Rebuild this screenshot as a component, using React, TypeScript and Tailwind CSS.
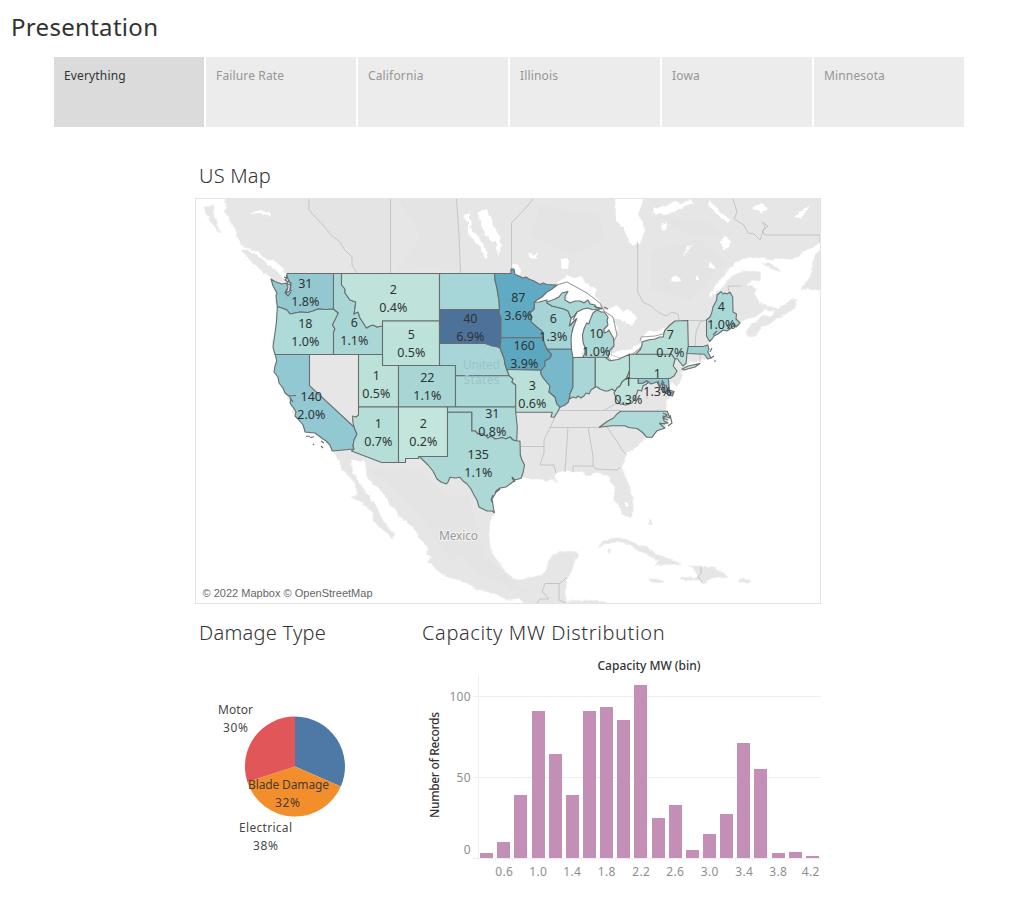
const FONT = "font-['Noto_Sans',sans-serif]";

const tabs = ["Everything", "Failure Rate", "California", "Illinois", "Iowa", "Minnesota"];

type Shape = { id: string; fill: string; points: string };

const LAND: string[] = [
  // North American mainland, clockwise from the Pacific coast of Canada
  "225,198 226,206 225,212 228,217 231,223 235,227 237,235 240,242 244,247 251,249 258,252 262,256 268,260 274,263 280,267 283,271 287,274 286,283 281,284 271,279 274,288 276,296 277,306 276,322 275,332 273,342 275,354 277,360 274,372 279,383 286,395 290,403 295,415 303,425 305,432 315,433 323,439 330,444 332,451 334,452 340,463 343,471 350,477 356,485 357,495 351,497 361,502 373,513 373,521 380,527 387,533 392,539 395,534 390,530 383,520 378,511 375,503 367,495 363,487 359,483 353,473 351,460 365,461 367,476 372,484 377,487 387,497 389,504 397,510 397,514 408,523 415,530 421,540 427,547 427,554 431,557 428,562 440,572 450,578 460,580 467,583 477,590 488,592 497,594 507,600 520,598 527,606 566,606 566,590 567,580 572,570 575,560 578,556 577,552 565,551 552,555 548,563 547,570 541,575 529,578 520,580 514,578 507,573 501,566 497,560 492,553 490,547 489,535 490,523 495,513 491,505 493,497 497,492 503,487 512,483 513,478 521,477 533,479 540,479 547,481 552,480 558,482 554,477 557,473 563,471 573,472 582,471 586,475 590,476 593,473 600,472 603,475 609,477 611,482 615,487 614,495 614,500 620,507 622,514 625,517 630,518 633,515 633,506 632,494 629,486 625,477 622,467 627,452 637,447 643,440 652,437 657,431 665,428 670,418 666,411 666,403 672,393 669,387 672,383 677,386 682,378 681,372 684,366 690,362 704,360 711,357 707,349 710,341 715,335 723,331 730,328 740,323 746,319 755,317 762,312 766,308 758,301 755,294 757,289 752,287 746,285 752,280 760,281 762,276 760,272 745,271 736,274 728,280 722,288 710,298 709,294 715,287 718,281 725,275 729,268 738,261 745,258 755,257 772,260 780,258 789,259 798,257 806,250 813,247 824,241 824,194 225,194",
  "242,250 247,250 257,255 263,260 268,265 276,270 285,281 281,283 273,279 264,273 253,263 247,257",
  "204,207 214,206 213,212 216,220 220,233 215,227 210,221 206,213",
  "824,246 816,254 812,265 811,275 805,284 801,289 824,290",
  "747,332 751,324 759,319 765,315 770,317 778,309 787,303 791,299 797,300 795,308 787,313 778,318 770,324 762,327 756,335 750,337 747,335",
  "762,263 770,263 777,268 781,272 775,270 769,268",
  "761,301 767,307 775,308 778,311 769,311 763,308",
  "598,547 603,541 615,538 622,538 630,541 638,545 648,548 656,554 665,557 674,561 681,564 655,565 659,560 651,558 645,553 636,550 631,545 622,542 608,543 604,544",
  "688,566 702,566 715,567 719,571 725,574 728,578 720,577 712,578 704,584 700,580 680,580 681,577 695,578 697,574 693,568",
  "649,579 657,579 664,582 656,583 651,582",
  "739,579 749,579 751,582 739,582",
  "650,519 652,521 652,525 649,524",
  "608,549 611,549 611,552 608,552",
  "566,601 585,600 607,602 607,604 566,604",
];

const WATER: string[] = [
  "615,194 645,194 642,204 638,214 642,221 645,230 642,239 641,245 637,243 633,246 629,241 626,233 622,226 616,221",
  "478,212 487,209 489,216 492,220 493,226 500,236 501,245 498,257 496,250 497,243 491,241 485,235 481,225",
  "463,216 470,213 470,220 472,231 478,236 483,244 488,253 487,259 483,255 480,246 474,241 468,233 468,223",
  "561,259 565,257 569,260 568,269 561,268",
  "528,252 533,256 539,252 536,259 531,258",
  "512,264 518,264 521,270 520,276 514,274",
  // Lake Superior
  "534,302 547,292 557,285 558,281 563,280 567,275 574,278 581,276 586,283 596,289 595,294 600,303 601,309 595,305 588,300 580,301 570,303 566,300 568,292 562,293 555,299 547,302",
  // Lake Michigan
  "577,312 583,309 597,310 591,320 587,323 583,335 585,348 580,357 573,358 570,348 571,338 574,327 569,326 573,318",
  // Lake Huron and Georgian Bay
  "598,310 607,310 617,305 622,311 631,310 637,318 632,326 622,320 613,318 618,328 615,339 609,342 606,333 608,318",
  // Lake Erie
  "607,357 611,353 618,351 629,350 642,342 641,350 629,355 618,361 610,360",
  // Lake Ontario
  "640,338 648,332 660,331 672,323 665,330 665,337 655,339 642,341",
  "654,208 666,206 675,201 682,204 690,199 694,203 684,206 676,211 666,215 653,213",
  "710,199 715,207 724,215 732,221 728,223 718,215 708,205",
  "752,208 762,203 768,209 761,213",
  "794,217 804,209 811,205 806,213 800,218",
  "683,256 687,248 693,244 688,251",
  "721,241 725,235 730,241 729,247 723,250",
  "661,225 668,223 664,231",
  "671,279 677,276 682,281 673,282",
  "707,267 711,261 716,269",
  "696,276 699,276 699,280 696,280",
  "267,259 276,262 285,270 281,272 272,268",
  "250,214 258,210 270,214 271,216 260,213",
  "625,502 628,503 628,507 625,506",
];

const RELIEF: string[] = [
  "300,198 390,198 390,272 357,272 350,250 322,225",
  "400,200 456,200 460,270 395,270 420,238",
  "540,205 600,215 605,240 570,255 530,235",
  "650,250 700,240 725,262 690,300 650,290",
  "370,470 420,470 450,500 480,550 450,560 420,515",
  "430,495 470,497 485,555 530,595 480,575 450,548",
  "655,215 710,222 730,238 690,236",
];

const OUTER_LINES: string[] = [
  "309,199 309,210 317,219 323,225 331,235 340,242 344,249 352,257 352,265 357,273",
  "390.5,199 390.5,273",
  "456.5,199 459,235 460.5,273",
  "533,199 523,211 511.5,223 511.5,270",
  "637.7,242 637.7,292 643,302 651,306 658,312 666,316 672,312 678,314 679,320",
  "733,199 737,212 734,219 744,225 748,233 754,234 760,240 765,226 762,222 768,226 762,231 765,235 820,235 820,242",
  "706,320 700,322 696,332 695,346",
  "688,320.5 707,320.5 M700,354 700,362",
  "729,292 728,286 741,286",
  "557,285 567,282 587,293 600,303 604,311 613,317 617,335 613,343 611,355 623,359 642,348",
  "558,410.5 621,410.5",
  "550,427.5 600,427.5",
  "568,427 565,472",
  "588,427 593,456 593,466",
  "573,472 573,466 593,466 596,469 617,470 620,467",
  "607,427 618,443 622,450 627,455",
  "558,408 555,417 550,428 544,440 544,453 540,465 554,465 556,473",
  "520,446.5 544,446.5",
  "603,411 615,404 622,403 635,397",
  "537,603 540,599 549,599 542,591 545,583.5 559,583.5 559,600 566,603",
  "559,584 564,580 567,577",
  "701,567 701,573 698,577 702,582",
  "646,381 647,399",
];

const STATES: Shape[] = [
  { id: "WA", fill: "#94c8d0", points: "271,279 275,281.5 282,284 286,283 288,287 286,293 290,291 291,285 287,277 287,273.5 333.5,273.5 333.5,309 326,309.5 318,309 313,311 308,312.5 300,312 295,313 290,314 287,310 282,308 277.3,306.7 276,296 277,293 273,286" },
  { id: "OR", fill: "#aedad7", points: "277.3,306.7 282,308 287,310 290,314 295,313 300,312 308,312.5 313,311 318,309 326,309.5 333.5,309 338.3,313 337,317 332.5,325 335,329 333.5,332 333.5,354.5 275,354.5 273,347 274,340 275,333 276.5,322" },
  { id: "CA", fill: "#92c8d1", points: "275.3,354.5 309.5,354.5 309.5,385.7 354,427 357,434.3 354,440 353,446 354,449 332.3,451 330,445 326,441 323,439 319,436 315,433 305,432 304,428 303,425 299,420 295,416 296,412 295,410 290,403 291,399 289,396 285,393 283,388 279,383 278,377 274,372 275,366 276.7,361" },
  { id: "ID", fill: "#a9d7d6", points: "333.5,273.5 341.5,273.5 341.5,285 345,289 345,293 350,300 355.7,302 355,308 354,314 358,312 360,318 362,321 366.5,328 370,326 373,325 377,327 382.5,326 382.5,354.5 333.5,354.5 333.5,332 335,329 332.5,325 338.3,313 333.5,309" },
  { id: "MT", fill: "#bfe3da", points: "341.5,273.5 439.5,273.5 439.5,321 382.5,321 382.5,326 377,327 373,325 370,326 366.5,328 362,321 360,318 358,312 354,314 355,308 355.7,302 350,300 345,293 345,289 341.5,285" },
  { id: "WY", fill: "#bde2da", points: "382.5,321 439.5,321 439.5,365.5 382.5,365.5" },
  { id: "UT", fill: "#bbe1d9", points: "358.5,354.5 382.5,354.5 382.5,365.5 398.5,365.5 398.5,407 358.5,407" },
  { id: "AZ", fill: "#b5ded8", points: "358.5,407 398.5,407 398.5,462.5 381.7,462.5 351.5,451 354,449 353,446 354,440 357,434.3 354,427 352.7,421 352.7,416 356,417 358.5,415" },
  { id: "CO", fill: "#a8d6d5", points: "398.5,365.5 455.5,365.5 455.5,407 398.5,407" },
  { id: "NM", fill: "#c3e6dc", points: "398.5,407 447.5,407 447.5,456.5 418.5,456.5 418.5,458.5 405.5,458.5 405.5,462.5 398.5,462.5" },
  { id: "ND", fill: "#a6d6d7", points: "439.5,273.5 494.5,273.5 495,280 497,288 498,295 499,300 499.5,309.5 439.5,309.5" },
  { id: "SD", fill: "#4d7299", points: "439.5,309.5 499.5,309.5 499,313 501,318 501,338 500,348 496,346.5 492,346 488,344.5 485,343.5 439.5,343.5" },
  { id: "NE", fill: "#a8d6d8", points: "439.5,343.5 485,343.5 488,344.5 492,346 496,346.5 500,348 502,353 504,358 505,364 506.7,369.5 509.3,375.8 455.5,375.8 455.5,365.5 439.5,365.5" },
  { id: "KS", fill: "#abd9d7", points: "455.5,375.8 509.3,375.8 513,379 512,382 515.7,385 515.7,407 455.5,407" },
  { id: "OK", fill: "#acd9d7", points: "447.5,407 515.7,407 515.7,412 517.3,427 516.7,441 513,440 510,437 506,439 502,437.5 499,438.5 495,439 491,436 488,438 486,436 483,434 478,434 475,431 471.7,431 471.7,412.3 447.5,412.3" },
  { id: "TX", fill: "#acd9d6", points: "447.5,412.3 471.7,412.3 471.7,431 475,431 478,434 483,434 486,436 488,438 491,436 495,439 499,438.5 502,437.5 506,439 510,437 513,440 516.7,441 520,441 520.3,455 522,460 524.5,465 523,473 521,478.3 515,480 512,477 514,481 511.5,483 506,487 500,488 496,491 495,494 492,499 493,505 494.3,512.7 492,511 487,511 479,507 477,500 474,495 471,489 467,484 463,481 460,477.3 455,478 450,477.3 448,482 446.5,484 441,482 437,479 433,471 428,465 419.3,456.5 447.5,456.5" },
  { id: "MN", fill: "#60abc3", points: "494.5,273.5 511,273.5 511,269 514,269 515,274.5 519,276 523,278 526,277 529,279 534,281 540,284.5 543,283 547,284.5 557,285 552,289 547,292 542,297 537,300 534.3,302.3 534.3,309 530,313 532,317 531,321.7 536.7,326.7 542,331 543.3,337.7 501,337.7 501,318 499,313 499.5,309.5 499,300 498,295 497,288 495,280" },
  { id: "IA", fill: "#5ba7c0", points: "501,337.7 543.3,337.7 544,342 547,349.3 551.7,354.3 550,358.3 545,361 545,366 541,370.3 506.7,369.5 505,364 504,358 502,353 500,348" },
  { id: "MO", fill: "#bbe0d9", points: "506.7,369.5 541,370.3 541,374 543.3,378 550,386 549,392 555,397 557,404 560,407.3 557,413 554,417.3 551,417 552.3,412.3 515.7,412.3 515.7,385 512,382 513,379 509.3,375.8" },
  { id: "WI", fill: "#a4d4d5", points: "534.3,302.3 539,302 547,300 547,303 552,306 560,308 564,309 568,311 570,316 571,319 569.3,326 573,322 576.7,318.5 575,323 573.3,327 572,332 571,338 571.5,349.3 547,349.3 544,342 543.3,337.7 542,331 536.7,326.7 531,321.7 532,317 530,313 534.3,309" },
  { id: "UP", fill: "#aad8d6", points: "547,302 555,299 559,297 562,293 568,291.5 565,296 565,300 570,303 575,301 580,301 584,303 588,300 590,304 595,305 596,308 602,308 597,310 592,309.5 588,308 583,309 577,312 574,316 571,318 568,311 564,309 560,308 552,306 547,303" },
  { id: "MI", fill: "#aad8d6", points: "593,313 597,310 601,312 604,312 608,317 607,321 608,325 604,329 604,333 607,332 609,330 611,334 613.5,338 614,346 610,350 608,357.5 583,357.3 585,353 585,348 583,342 582.5,335 584,329 586.7,323 589,324 590,320" },
  { id: "IL", fill: "#77b9ca", points: "547,349.3 571.5,349.3 573,358 573,387 570,394 568.5,402 565,405 560,407.3 557,404 555,397 549,392 550,386 543.3,378 541,374 541,370.3 545,366 545,361 550,358.3 551.7,354.3" },
  { id: "IN", fill: "#a9d7d7", points: "573,357.5 595.3,357.3 595.3,387 591,390 589,394 586,393 584,396 581,398 578,396 576,398 573,397 569.5,399 570,394 573,387" },
  { id: "OH", fill: "#bbe1d9", points: "595.3,357.3 605,357.3 610,360.7 618,359.5 629.5,354.3 629.5,371 626.7,378 622,382 620,386 617,388 615,391.5 612,389 608,391 605,391 600,389 597.3,387 595.3,387" },
  { id: "WV", fill: "#bfe4da", points: "629.5,371 629.5,378.5 638.3,378.5 638.3,383.5 643,383 646.7,380.7 648,383 643,386 641.7,391 638,390 637,393 635,398 632,403 629,404 626,405 620,404 618,401 616.5,399 614,393 615,391.5 617,388 620,386 622,382 626.7,378" },
  { id: "PA", fill: "#b7dfd8", points: "629.5,354.3 671.7,354.3 675,359 673.3,366 677,371 674,376 670,378.5 629.5,378.5" },
  { id: "NY", fill: "#b7dfd8", points: "635.7,354.3 640.7,349 642,345 642,342 648,340 655,339 660,337 663.3,337 664,333 665,330 670,325 675,321 687.7,320.5 688.3,346.5 687,353.5 686,363.5 683,366 677,358.5 675,359 671.7,354.3" },
  { id: "LI", fill: "#b7dfd8", points: "682,369 688,366 700,363.5 695,367 684,370" },
  { id: "MD", fill: "#93c8d1", points: "638.3,378.5 668.3,378.5 669.3,390 674,391.5 672.5,396 669,395 663.5,391.5 662,382 660,388 657,382 651,384 646.7,380.7 643,383 638.3,383.5" },
  { id: "MA", fill: "#9fd1d4", points: "688.3,346.5 703.3,346.5 707.7,345 709,349 707.7,352 711,358 707.7,359 704.3,354.3 687,353.5" },
  { id: "ME", fill: "#a9d8d7", points: "706.5,320 710,317 711.7,313 713,307 716.7,300 717,295 721,291.7 723,294 725,293 727,294 730,292.3 732.7,297 733,312 736.5,314 736,319 740,323 738,325 736,327 733,326 730,329 727,331 723,330 718,334 714,336 712,339 709.5,341.5 706.5,336" },
  { id: "NC", fill: "#aedad7", points: "620.7,411.2 667.3,411.2 670,418 663,416 664,421 668,423 660,424 665,428 657,430.7 652,437.3 647,437.3 642,432 637,428.5 628.5,427.5 625,425.7 612,425.7 599.3,427.3 607,421.5 613.5,418 617,414" },
];

const DETAILS = [
  "M284 277l3 1-2 2 3 2M287 289l-2 4 3 3 3-4M291 282l-1 8 2 1M289 280l-2 4 3 1M286 275l2 3",
  "M289 396l7-.5M290 398l3 4M306 436.3h4M310 437.5l4-.7M313 444l1 1M321 441l3 2M321 446l2 2",
  "M493 495l-2 5 2 3M500 489l-5 4M512 478l3 4",
  "M663 413l4 2-4 3 5 2M670 415l2 8-4 3M659 423l6 1",
  "M662 380l3 6-2 5 5 3M666 385l2 7 5 1M658 381l2 7M664 382l-3 8M668 388l3 7",
  "M712 348l-2 4M711 358l3-2M714 361h2",
  "M577 312l-4 8M574 321l-4 5M594 306l8 3M604 307l4 2",
  "M717 331l-4 4M727 326l3 3M733 322l3 4",
];

const LABELS: [number, number, string, string][] = [
  [305, 288, "31", "1.8%"],
  [305, 328, "18", "1.0%"],
  [354, 327, "6", "1.1%"],
  [393, 294, "2", "0.4%"],
  [411, 339, "5", "0.5%"],
  [470, 323, "40", "6.9%"],
  [518, 302, "87", "3.6%"],
  [524, 350, "160", "3.9%"],
  [553, 323, "6", "1.3%"],
  [596, 338, "10", "1.0%"],
  [376, 380, "1", "0.5%"],
  [427, 382, "22", "1.1%"],
  [311, 401, "140", "2.0%"],
  [378, 428, "1", "0.7%"],
  [423, 428, "2", "0.2%"],
  [492, 418, "31", "0.8%"],
  [478, 459, "135", "1.1%"],
  [532, 390, "3", "0.6%"],
  [628, 386, "1", "0.3%"],
  [657, 378, "1", "1.3%"],
  [670, 339, "7", "0.7%"],
  [721, 311, "4", "1.0%"],
];

function UsMap() {
  return (
    <div className="h-[406px] w-[626px] border border-[#e4e4e4] bg-white">
      <svg width="624" height="404" viewBox="196 199 624 404" className={`block ${FONT}`}>
        <defs>
          <filter id="coast" filterUnits="userSpaceOnUse" x="196" y="199" width="624" height="404">
            <feTurbulence type="fractalNoise" baseFrequency="0.2" numOctaves="2" seed="4" result="noise" />
            <feDisplacementMap in="SourceGraphic" in2="noise" scale="3.5" xChannelSelector="R" yChannelSelector="G" />
          </filter>
        </defs>
        <g filter="url(#coast)">
          <g fill="#e6e6e6" stroke="#ededed" strokeWidth="0.8">
            {LAND.map((p) => <polygon key={p} points={p} />)}
          </g>
          <g fill="#e2e2e2" opacity="0.35">
            {RELIEF.map((p) => <polygon key={p} points={p} />)}
          </g>
          <g fill="#fff">
            {WATER.map((p) => <polygon key={p} points={p} />)}
          </g>
        </g>
        <g fill="none" stroke="#bdbdbd" strokeWidth="0.8">
          {OUTER_LINES.map((p) => <path key={p} d={"M" + p} />)}
        </g>
        <g fill="none" stroke="#999" strokeWidth="0.9">
          <path d="M557 285L567 282 587 293 600 303 604 311 613 317 617 335 613 343" />
          <path d="M608 357L612 361 620 360 632 355 642 346M640 341L641 337 655 336 663 334 666 329" />
        </g>
        <g stroke="#686e6e" strokeWidth="1.1" strokeLinejoin="round">
          {STATES.map((s) => <polygon key={s.id} points={s.points} fill={s.fill} />)}
        </g>
        <g fill="none" stroke="#626969" strokeWidth="1.1">
          {DETAILS.map((d) => <path key={d} d={d} />)}
        </g>
        <g fontSize="12" textAnchor="middle" fill="#98c5c6">
          <text x="481.5" y="368.5" textLength="37">United</text>
          <text x="481.5" y="383.5" textLength="36">States</text>
        </g>
        <text x="458.5" y="540" fontSize="12" textAnchor="middle" textLength="39" fill="#999" stroke="#f2f2f2" strokeWidth="2" paintOrder="stroke">Mexico</text>
        <g fontSize="12.5" textAnchor="middle" fill="#2e3434">
          {LABELS.map(([x, y, count, rate]) => (
            <text key={`${x}-${y}`}>
              <tspan x={x + 0.3} y={y}>{count}</tspan>
              <tspan x={x + 0.3} y={y + 18}>{rate}</tspan>
            </text>
          ))}
        </g>
        <rect x="199" y="585" width="177" height="15" fill="#fff" opacity="0.8" />
        <text x="202.5" y="597" fontSize="11" textLength="170" className="font-['Liberation_Sans',sans-serif]" fill="#666">
          © 2022 Mapbox © OpenStreetMap
        </text>
      </svg>
    </div>
  );
}

function DamagePie() {
  return (
    <svg width="227" height="249" viewBox="195 650 227 249" className={`block ${FONT}`}>
      <path d="M295 766.5V716.5A50 50 0 0 1 340.8 786.5Z" fill="#4e79a7" />
      <path d="M295 766.5L340.8 786.5A50 50 0 0 1 247.4 782Z" fill="#f28e2b" />
      <path d="M295 766.5L247.4 782A50 50 0 0 1 295 716.5Z" fill="#e15759" />
      <g fontSize="12" textAnchor="middle" fill="#333" fillOpacity="0.93">
        <text x="235.5" y="714" textLength="35">Motor</text>
        <text x="235.5" y="732" textLength="25">30%</text>
        <text x="288.5" y="789" textLength="81">Blade Damage</text>
        <text x="287.5" y="807" textLength="25">32%</text>
        <text x="265.5" y="832" textLength="53">Electrical</text>
        <text x="265.5" y="850" textLength="25">38%</text>
      </g>
    </svg>
  );
}

const BARS: [number, number][] = [
  [480, 5], [497, 16], [514, 63], [532, 147], [549, 104], [566, 63], [583, 147], [600, 151], [617, 138], [634, 173],
  [652, 40], [669, 53], [686, 8], [703, 24], [720, 44], [737, 115], [754, 89], [772, 5], [789, 6], [806, 2],
];
const TICKS: [number, string][] = [
  [504, "0.6"], [538, "1.0"], [572, "1.4"], [606.5, "1.8"], [641, "2.2"], [675, "2.6"], [709.5, "3.0"], [744, "3.4"], [778, "3.8"], [810.5, "4.2"],
];

function CapacityChart() {
  return (
    <svg width="405" height="249" viewBox="422 650 405 249" className={`block ${FONT}`}>
      <g stroke="#efefef" strokeWidth="1">
        <path d="M473 696.5H821M473 777.5H821M473 858.5H821M478.5 675V858" />
        {BARS.map(([x]) => <path key={x} d={`M${x - 1.5} 858V861`} />)}
      </g>
      {BARS.map(([x, h]) => <rect key={x} x={x} y={858 - h} width="13" height={h} fill="#c38fb6" />)}
      <g fontSize="12" fill="#8e8e8e">
        {TICKS.map(([x, t]) => <text key={t} x={x} y="876" textAnchor="middle" textLength="17.5">{t}</text>)}
        <g textAnchor="end">
          <text x="470.5" y="701" textLength="21">100</text>
          <text x="470.5" y="782" textLength="14">50</text>
          <text x="470.5" y="854">0</text>
        </g>
      </g>
      <g fontSize="12" textAnchor="middle" fill="#333" fontWeight="500">
        <text x="649" y="670" textLength="103">Capacity MW (bin)</text>
        <text transform="translate(439 765) rotate(-90)" textLength="106">Number of Records</text>
      </g>
    </svg>
  );
}

export default function App() {
  return (
    <main className={`h-[899px] w-[1015px] overflow-hidden bg-white text-[#333] ${FONT}`}>
      <h1 className="flex h-[57px] items-center pb-[4px] pl-[11px] text-2xl tracking-[0.3px]">Presentation</h1>
      <nav className="ml-[54px] flex gap-[2px]">
        {tabs.map((t, i) => (
          <button
            key={t}
            className={`flex h-[70px] w-[150px] items-start px-[10px] pt-[10px] text-xs leading-[18px] tracking-[0.15px] ${
              i === 0 ? "bg-[#dbdbdb] text-[#333]" : "bg-[#ececec] text-[#969696]"
            }`}
          >
            {t}
          </button>
        ))}
      </nav>
      <div className="ml-[195px] w-[632px]">
        <h2 className="flex h-[71px] items-end pb-[7px] pl-[4px] text-xl font-light leading-[30px] tracking-[0.2px]">US Map</h2>
        <UsMap />
        <div className="flex">
          <section className="w-[227px]">
            <h2 className="h-[46px] pl-[4px] pt-[14px] text-xl font-light leading-[30px] tracking-[0.25px]">Damage Type</h2>
            <DamagePie />
          </section>
          <section className="w-[405px]">
            <h2 className="h-[46px] pt-[14px] text-xl font-light leading-[30px] tracking-[0.6px]">Capacity MW Distribution</h2>
            <CapacityChart />
          </section>
        </div>
      </div>
    </main>
  );
}
